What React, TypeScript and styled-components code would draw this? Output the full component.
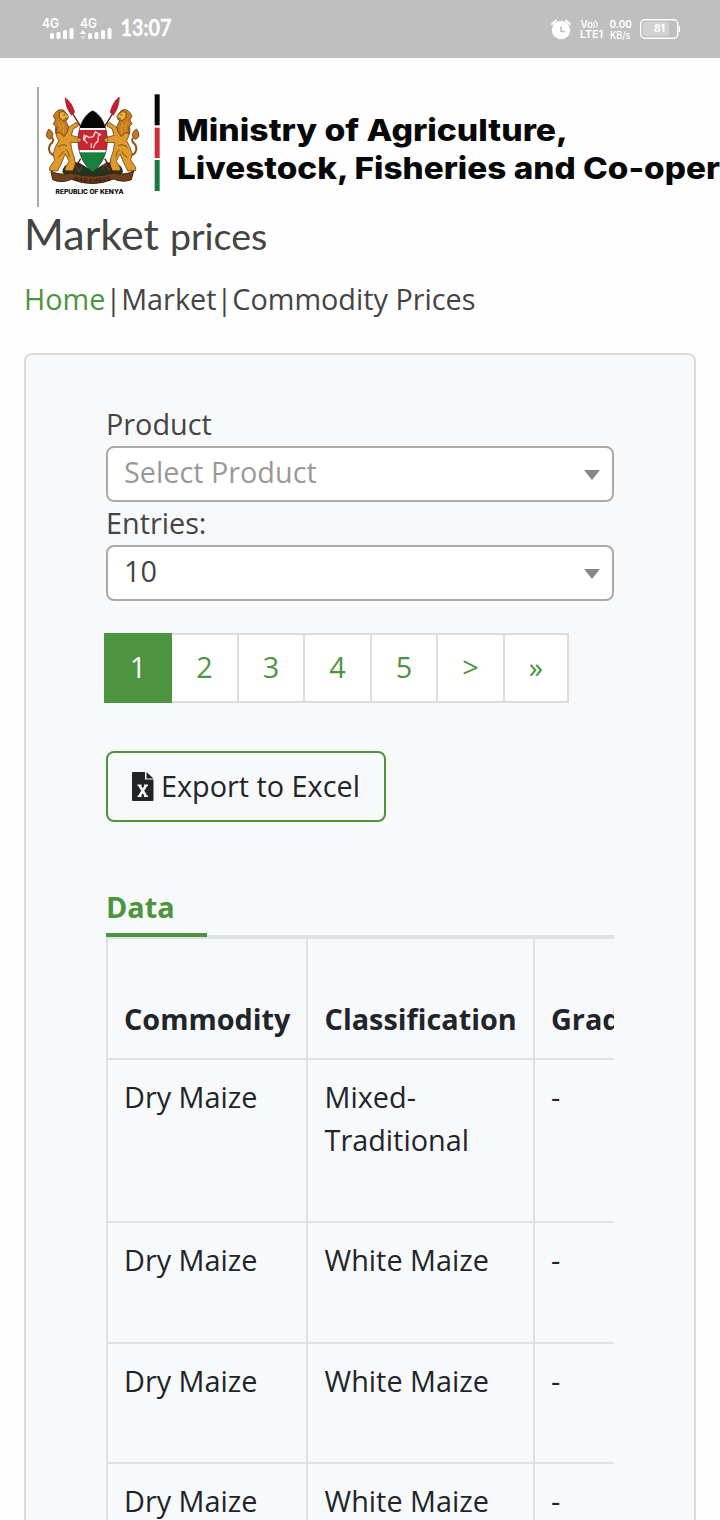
import React from 'react';
import styled, { createGlobalStyle } from 'styled-components';

const Global = createGlobalStyle`
  *, *::before, *::after { box-sizing: border-box; }
  html, body { margin: 0; padding: 0; background: #fff; }
  body {
    font-family: 'Open Sans', 'Liberation Sans', sans-serif;
    font-size: 28.8px;
    line-height: 43.2px;
    color: #444;
  }
`;

const Page = styled.div`
  width: 720px;
  height: 1520px;
  overflow: hidden;
  background: #fefefe;
  display: flex;
  flex-direction: column;
`;

const StatusBar = styled.header`
  flex: none;
  height: 58px;
  background: #bfbfbf;
  display: flex;
  justify-content: space-between;
  svg { display: block; }
`;

const Brand = styled.div`
  flex: none;
  height: 151px;
  padding: 22px 0 0 30px;
  svg { display: block; }
`;

const Title = styled.h1`
  flex: none;
  margin: 0;
  height: 52px;
  padding-left: 24px;
  font-family: Lato, 'Open Sans', sans-serif;
  font-weight: 400;
  font-size: 43px;
  line-height: 50px;
  color: #444;
  small { font-size: 37.5px; letter-spacing: 0; }
`;

const Crumbs = styled.nav`
  flex: none;
  margin-top: 16px;
  padding-left: 24px;
  height: 43px;
  white-space: nowrap;
  a { color: #4d9440; text-decoration: none; }
`;

const Card = styled.main`
  flex: none;
  margin: 33px 24px 0;
  height: 1300px;
  padding: 47px 80px 0;
  background: #f8f9fb;
  border: 2px solid #dadada;
  border-radius: 8px;
`;

const Field = styled.div`
  height: 99px;
`;

const Label = styled.label`
  display: block;
  height: 44px;
`;

const Select = styled.div<{ $placeholder?: boolean }>`
  display: flex;
  align-items: center;
  justify-content: space-between;
  height: 56px;
  padding: 0 12px 4px 16px;
  background: #fff;
  border: 2px solid #aaa;
  border-radius: 8px;
  color: ${(p) => (p.$placeholder ? '#999' : '#444')};
`;

const Caret = styled.i`
  margin-top: 6px;
  border: 8px solid transparent;
  border-top: 10px solid #888;
  border-bottom: 0;
`;

const Pager = styled.div`
  display: flex;
  width: 465px;
  height: 70px;
  margin: 33px 0 0 -2px;
`;

const PageLink = styled.a<{ $active?: boolean; $width: number }>`
  flex: none;
  width: ${(p) => p.$width}px;
  height: 70px;
  text-align: center;
  line-height: 64px;
  color: ${(p) => (p.$active ? '#fff' : '#4d9440')};
  background: ${(p) => (p.$active ? '#4d9440' : '#fff')};
  border: 2px solid ${(p) => (p.$active ? '#4d9440' : '#ddd')};
  ${(p) => !p.$active && 'border-left: 0;'}
`;

const ExportButton = styled.button`
  display: flex;
  align-items: center;
  width: 280px;
  height: 71px;
  margin-top: 48px;
  padding: 0 0 2px 24px;
  font: inherit;
  color: #212529;
  white-space: nowrap;
  background: transparent;
  border: 2px solid #4d9440;
  border-radius: 8px;
  svg { display: block; margin: 1px 7px 0 0; }
`;

const Tabs = styled.div`
  height: 54px;
  margin-top: 63px;
  border-bottom: 4px solid #dee2e6;
`;

const Tab = styled.div`
  width: 101px;
  height: 52px;
  border-bottom: 4px solid #4d9440;
  color: #4d9440;
  font-weight: 700;
`;

const TableClip = styled.div`
  overflow: hidden;
`;

const Table = styled.table`
  table-layout: fixed;
  width: 694px;
  border-collapse: separate;
  border-spacing: 0;
  border-left: 2px solid #dee2e6;
  color: #212529;
`;

const Col = styled.col<{ $width: number }>`
  width: ${(p) => p.$width}px;
`;

const Row = styled.tr<{ $height: number }>`
  height: ${(p) => p.$height}px;
`;

const HeadCell = styled.th`
  padding: 0 0 18px 16px;
  text-align: left;
  vertical-align: bottom;
  font-weight: 700;
  border: solid #dee2e6;
  border-width: 0 2px 2px 0;
  &:nth-child(2) { padding-left: 16.6px; }
`;

const Cell = styled.td`
  padding: 15px 16px 0;
  vertical-align: top;
  border: solid #dee2e6;
  border-width: 0 2px 2px 0;
  &:nth-child(2) { padding-left: 16.6px; }
`;

const StatusLeft = () => (
  <svg width="200" height="58" viewBox="0 0 200 58" fill="#fff" fontFamily="Inter, sans-serif">
    <text x="42" y="28" fontSize="13" fontWeight="600" textLength="17" lengthAdjust="spacingAndGlyphs">4G</text>
    <text x="80" y="28" fontSize="13" fontWeight="600" textLength="17" lengthAdjust="spacingAndGlyphs">4G</text>
    <rect x="50" y="33" width="4" height="6" rx="1.5" />
    <rect x="56.5" y="32" width="4" height="7" rx="1.5" />
    <rect x="63" y="30" width="4" height="9" rx="1.5" />
    <rect x="69.5" y="28" width="4" height="11" rx="1.5" />
    <path d="M80 34l3-4 3 4z" />
    <path d="M80 36h6l-3 4z" opacity=".45" />
    <rect x="88" y="33" width="4" height="6" rx="1.5" />
    <rect x="94.5" y="32" width="4" height="7" rx="1.5" />
    <rect x="101" y="30" width="4" height="9" rx="1.5" />
    <rect x="107.5" y="28" width="4" height="11" rx="1.5" />
    <text x="120.5" y="36" fontFamily="Lato, sans-serif" fontSize="22.5" fontWeight="700" stroke="#fff" strokeWidth=".3" textLength="51" lengthAdjust="spacingAndGlyphs">13:07</text>
  </svg>
);

const StatusRight = () => (
  <svg width="180" height="58" viewBox="540 0 180 58" fill="#fff" fontFamily="Inter, sans-serif">
    <circle cx="561" cy="30" r="9.2" />
    <path d="M552 24l4-3.500M570 24l-4-3.500" stroke="#fff" strokeWidth="2" strokeLinecap="round" />
    <path d="M561 26.500v5h4" stroke="#bfbfbf" strokeWidth="1.6" fill="none" />
    <text x="580.5" y="28" fontSize="10" fontWeight="600" textLength="12.5" lengthAdjust="spacingAndGlyphs">Vo</text>
    <path d="M593.500 22q2 3 0 6M595 20.500q4 4 1 7.500" stroke="#fff" strokeWidth="1.1" fill="none" />
    <text x="580" y="37.7" fontSize="10.4" fontWeight="600" textLength="23" lengthAdjust="spacingAndGlyphs">LTE1</text>
    <text x="609.5" y="28" fontSize="10.8" fontWeight="600" textLength="22.5" lengthAdjust="spacingAndGlyphs">0.00</text>
    <text x="610" y="38.7" fontSize="10" fontWeight="500" textLength="20.5" lengthAdjust="spacingAndGlyphs">KB/s</text>
    <rect x="640.7" y="19.7" width="37" height="18.6" rx="4" fill="none" stroke="#fff" strokeWidth="1.4" />
    <rect x="643" y="22" width="26" height="14" rx="2" opacity=".3" />
    <path d="M679.300 26v6" stroke="#fff" strokeWidth="1.2" />
    <text x="654" y="32" fontSize="10" fontWeight="700" textLength="11" lengthAdjust="spacingAndGlyphs">81</text>
  </svg>
);

const Lion = () => (
  <g stroke="#4a2c0a" strokeWidth="2" strokeLinejoin="round">
    <path d="M82 228Q60 226 57 208Q57 194 67 187Q73 179 66 174" fill="none" stroke="#8a5414" strokeWidth="6" />
    <path d="M49 167Q50 152 57 147Q68 154 69 164Q68 175 60 178Q51 176 49 167Z" fill="#c07a1c" />
    <path d="M78 136Q72 158 86 182Q76 198 69 222L74 240L59 262L59 272L83 273L96 246L106 222L117 244L105 264L106 272L130 272Q140 250 133 232L127 216L122 188L146 187Q157 184 153 174L124 166L130 146L144 139Q147 128 136 128L114 144Z" fill="#e0992a" />
    <path d="M76 98Q86 84 102 91L112 104L108 124L116 140L112 156L102 170L90 158L78 160L80 142L70 132L76 120L70 108Z" fill="#c67d1d" />
    <path d="M88 97Q101 90 108 101L116 109L112 119L98 121L88 113Z" fill="#eeae3c" />
    <path d="M100 105l5-1M104 116l8-2" fill="none" stroke="#2c1b0a" />
    <path d="M84 126l8 14-3 14M97 129l5 14-2 16" stroke="#f0b040" fill="none" />
    <path d="M84 202q14-12 27-5M84 232q13-8 17-18M108 208q10 9 10 24" fill="none" />
  </g>
);

const Logo = () => (
  <svg width="690" height="130" viewBox="30 80 690 130">
    <rect x="37" y="87" width="2" height="120" fill="#aaa" />
    <g transform="translate(30 80) scale(.33333)">
      <path d="M97 276q2-22 22-25 24-10 40 4l29 18 29-18q16-14 40-4 20 3 22 25l-15 18H112z" fill="#23351e" />
      <path d="M104 270l11-14 9 17 13-19 9 20 11-16M215 269l12-18 9 19 14-17 8 19 14-11" fill="none" stroke="#6a3a26" strokeWidth="4" />
      <Lion />
      <g transform="translate(376 0) scale(-1 1)"><Lion /></g>
      <path d="M125 96L156 146M251 96L220 146M152 236L130 272M224 236L246 272" stroke="#5c1418" strokeWidth="4" />
      <path d="M105 53Q126 66 134 97L124 106Q106 82 105 53ZM268 51Q249 64 240 97L250 106Q268 82 268 51Z" fill="#c4202f" stroke="#701522" strokeWidth="1.5" />
      <clipPath id="shield-clip"><path d="M188 92C214 104 232 140 232 182C232 226 212 256 188 277C164 256 144 226 144 182C144 140 162 104 188 92Z" /></clipPath>
      <g clipPath="url(#shield-clip)">
        <rect x="140" y="88" width="96" height="58" fill="#050505" />
        <rect x="140" y="144" width="96" height="74" fill="#fff" />
        <rect x="140" y="150" width="96" height="60" fill="#cb2433" />
        <rect x="140" y="217" width="96" height="62" fill="#16803c" />
      </g>
      <path d="M188 92C214 104 232 140 232 182C232 226 212 256 188 277C164 256 144 226 144 182C144 140 162 104 188 92Z" fill="none" stroke="#262422" strokeWidth="2" />
      <path d="M172 190l-9-11 5-12 9 6 12-3 8-15 8 6 7 2-7 5-1 15-9 9-5 12M184 190v14M163 163l-3 18" fill="none" stroke="#f5d8d2" strokeWidth="4" strokeLinejoin="round" />
      <path d="M142 187q13 1 12-9l-8-6M234 187q-13 1-12-9l8-6" fill="#e0992a" stroke="#4a2c0a" strokeWidth="2" />
      <path d="M63 274Q92 288 124 279Q187 298 250 279Q283 288 311 273L304 299Q277 309 251 297Q188 324 124 298Q95 311 68 299Z" fill="#70401c" stroke="#3d2410" strokeWidth="3" />
      <path id="motto-curve" d="M131 300Q188 316 246 298" fill="none" />
      <text fontFamily="Liberation Serif, serif" fontSize="17" fontWeight="700" fill="#2a1a10"><textPath href="#motto-curve" textLength="114">HARAMBEE</textPath></text>
      <rect x="374" y="43" width="15" height="93" fill="#050505" />
      <rect x="374" y="143" width="15" height="91" fill="#ce2e35" />
      <rect x="374" y="240" width="15" height="93" fill="#187b40" />
    </g>
    <g fontFamily="Inter, 'Open Sans', sans-serif" fontWeight="800" fill="#080808">
      <text x="55.5" y="194" fontSize="6" textLength="68" lengthAdjust="spacingAndGlyphs">REPUBLIC OF KENYA</text>
      <text x="177" y="140.5" fontSize="30" textLength="391" lengthAdjust="spacingAndGlyphs">Ministry of Agriculture,</text>
      <text x="177" y="178.5" fontSize="30" textLength="543" lengthAdjust="spacingAndGlyphs">Livestock, Fisheries and Co-oper</text>
    </g>
  </svg>
);

const ExcelIcon = () => (
  <svg width="22" height="29" viewBox="0 0 22 29">
    <path d="M1 0H13V7.500H21.500V28Q21.500 29 20.500 29H1Q0 29 0 28V1Q0 0 1 0Z" fill="#212529" />
    <path d="M14.500 0L21.500 6.500H14.500Z" fill="#212529" />
    <path d="M7.500 13.500L14 24M14 13.500L7.500 24" stroke="#f8f9fb" strokeWidth="2.5" />
    <path d="M5.500 13.200h4M12 13.200h4M5.500 24.300h4M12 24.300h4" stroke="#f8f9fb" strokeWidth="1.6" />
  </svg>
);

const pages = [
  { label: '1', width: 68 },
  { label: '2', width: 67 },
  { label: '3', width: 66 },
  { label: '4', width: 67 },
  { label: '5', width: 66 },
  { label: '>', width: 67 },
  { label: '»', width: 64 },
];

const rows = [
  { name: 'Dry Maize', kind: 'Mixed-Traditional', height: 163 },
  { name: 'Dry Maize', kind: 'White Maize', height: 121 },
  { name: 'Dry Maize', kind: 'White Maize', height: 120 },
  { name: 'Dry Maize', kind: 'White Maize', height: 121 },
];

export default function App() {
  return (
    <Page>
      <Global />
      <StatusBar>
        <StatusLeft />
        <StatusRight />
      </StatusBar>
      <Brand><Logo /></Brand>
      <Title>Market <small>prices</small></Title>
      <Crumbs><a>Home</a>|Market|Commodity Prices</Crumbs>
      <Card>
        <Field>
          <Label>Product</Label>
          <Select $placeholder>Select Product<Caret /></Select>
        </Field>
        <Field>
          <Label>Entries:</Label>
          <Select>10<Caret /></Select>
        </Field>
        <Pager>
          {pages.map((p, i) => (
            <PageLink key={p.label} $active={i === 0} $width={p.width}>{p.label}</PageLink>
          ))}
        </Pager>
        <ExportButton><ExcelIcon />Export to Excel</ExportButton>
        <Tabs><Tab>Data</Tab></Tabs>
        <TableClip>
          <Table>
            <colgroup><Col $width={200} /><Col $width={227} /><Col $width={265} /></colgroup>
            <thead>
              <Row $height={121}>
                <HeadCell>Commodity</HeadCell>
                <HeadCell>Classification</HeadCell>
                <HeadCell>Grade</HeadCell>
              </Row>
            </thead>
            <tbody>
              {rows.map((r, i) => (
                <Row key={i} $height={r.height}>
                  <Cell>{r.name}</Cell>
                  <Cell>{r.kind}</Cell>
                  <Cell>-</Cell>
                </Row>
              ))}
            </tbody>
          </Table>
        </TableClip>
      </Card>
    </Page>
  );
}
